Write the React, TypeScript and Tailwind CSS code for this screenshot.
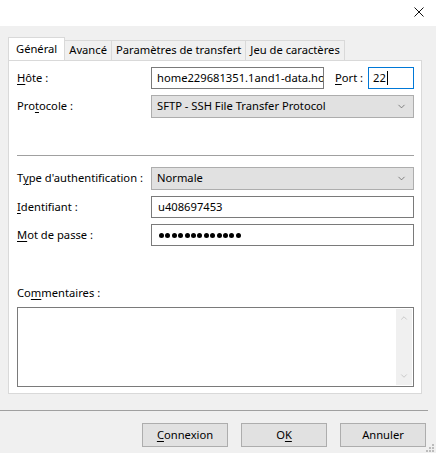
import { ChevronDown, ChevronUp } from "lucide-react";

const font = { fontFamily: '"Noto Sans", "Segoe UI", sans-serif' };

function Key({ c }: { c: string }) {
  return <span className="underline underline-offset-2">{c}</span>;
}

function Select({ value }: { value: string }) {
  return (
    <div className="flex-1 h-[23px] bg-[#e1e1e1] border border-[#adadad] flex items-center pl-[5px] pr-[6px]">
      <span className="flex-1">{value}</span>
      <ChevronDown size={11} strokeWidth={1.5} className="text-[#555]" />
    </div>
  );
}

function Tab({ label, active }: { label: string; active?: boolean }) {
  if (active)
    return (
      <div className="h-[23px] px-[7px] bg-white border border-b-0 border-[#d9d9d9] flex items-center relative z-10 -mb-px">
        {label}
      </div>
    );
  return (
    <div className="h-[20px] mt-[3px] px-[4px] bg-[#f0f0f0] border border-l-0 border-b-0 border-[#d9d9d9] flex items-center">
      {label}
    </div>
  );
}

export default function App() {
  return (
    <div className="w-[436px] h-[453px] bg-[#f0f0f0] text-[11.2px] text-black relative overflow-hidden whitespace-nowrap" style={font}>
      {/* barre de titre */}
      <div className="h-[26px] bg-white flex justify-end items-start pt-[7px] pr-[12px]">
        <svg width="10" height="10" viewBox="0 0 10 10">
          <path d="M0.5 0.5 L9.5 9.5 M9.5 0.5 L0.5 9.5" stroke="#111" strokeWidth="1" />
        </svg>
      </div>

      <div className="pl-[8px] pr-[14px] pt-[11px]">
        {/* onglets */}
        <div className="flex items-start">
          <Tab label="Général" active />
          <Tab label="Avancé" />
          <Tab label="Paramètres de transfert" />
          <Tab label="Jeu de caractères" />
        </div>

        {/* panneau */}
        <div className="h-[334px] bg-white border border-[#d9d9d9] pl-[8px] pr-[7px] pt-[6px]">
          <div className="flex items-center h-[22px]">
            <div className="w-[134px]">
              <Key c="H" />ôte :
            </div>
            <div className="w-[173px] h-[22px] border border-[#7a7a7a] flex items-center pl-[5px] overflow-hidden">
              home229681351.1and1-data.ho
            </div>
            <div className="ml-[11px] w-[33px]">
              <Key c="P" />ort :
            </div>
            <div className="flex-1 h-[22px] border border-[#0078d7] flex items-center pl-[4px]">
              22<span className="inline-block w-px h-[14px] bg-black ml-px" />
            </div>
          </div>

          <div className="flex items-center mt-[6px]">
            <div className="w-[134px]">
              Pro<Key c="t" />ocole :
            </div>
            <Select value="SFTP - SSH File Transfer Protocol" />
          </div>

          <div className="h-px bg-[#a0a0a0] mt-[37px]" />

          <div className="flex items-center mt-[11px]">
            <div className="w-[134px]">
              T<Key c="y" />pe d'authentification :
            </div>
            <Select value="Normale" />
          </div>

          <div className="flex items-center mt-[6px]">
            <div className="w-[134px]">
              <Key c="I" />dentifiant :
            </div>
            <div className="flex-1 h-[22px] border border-[#7a7a7a] flex items-center pl-[6px]">u408697453</div>
          </div>

          <div className="flex items-center mt-[6px]">
            <div className="w-[134px]">
              <Key c="M" />ot de passe :
            </div>
            <div className="flex-1 h-[22px] border border-[#7a7a7a] flex items-center pl-[7px] gap-[1.4px]">
              {Array.from({ length: 13 }).map((_, i) => (
                <span key={i} className="w-[5px] h-[5px] rounded-full bg-black" />
              ))}
            </div>
          </div>

          <div className="mt-[38px] h-[18px] flex items-center">
            Co<Key c="m" />mentaires :
          </div>

          <div className="mt-[5px] h-[80px] border border-[#7a7a7a] flex justify-end p-px">
            <div className="w-[16px] bg-[#f0f0f0] flex flex-col items-center justify-between py-[4px]">
              <ChevronUp size={10} strokeWidth={2} className="text-[#c2c2c2]" />
              <ChevronDown size={10} strokeWidth={2} className="text-[#c2c2c2]" />
            </div>
          </div>
        </div>
      </div>

      {/* séparateur bas */}
      <div className="h-px bg-[#a0a0a0] w-[428px] mt-[16px]" />

      {/* boutons */}
      <div className="flex justify-end gap-[13px] pr-[10px] mt-[12px]">
        <button className="w-[86px] h-[24px] bg-[#e1e1e1] border border-[#adadad]">
          <Key c="C" />onnexion
        </button>
        <button className="w-[86px] h-[24px] bg-[#e1e1e1] border border-[#adadad]">
          O<Key c="K" />
        </button>
        <button className="w-[86px] h-[24px] bg-[#e1e1e1] border border-[#adadad]">Annuler</button>
      </div>

      {/* poignée de redimensionnement */}
      <div className="absolute right-[2px] bottom-[1px] grid grid-cols-3 gap-px">
        {[0, 0, 1, 0, 1, 1, 1, 1, 1].map((v, i) => (
          <span key={i} className={v ? "w-[2px] h-[2px] bg-[#bcbcbc]" : "w-[2px] h-[2px]"} />
        ))}
      </div>
    </div>
  );
}
